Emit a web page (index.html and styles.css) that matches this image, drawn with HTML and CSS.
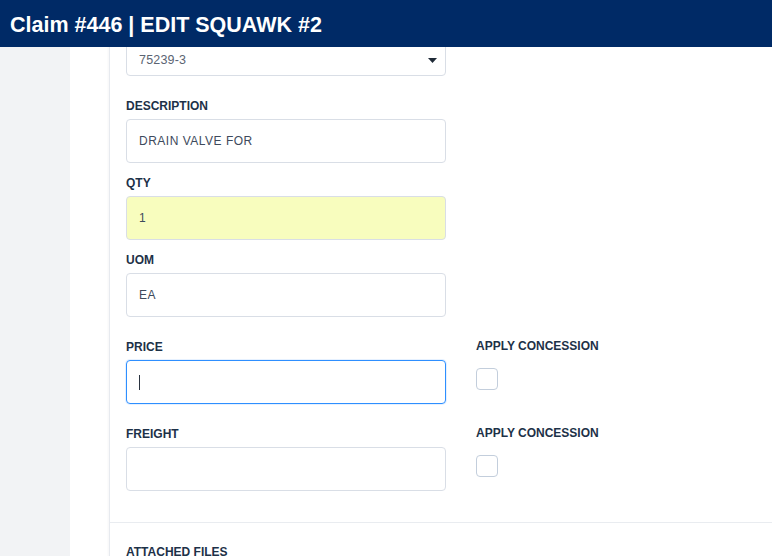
FILE: index.html
```html
<!DOCTYPE html>
<html lang="en">
<head>
<meta charset="utf-8">
<title>Claim #446 | EDIT SQUAWK #2</title>
<link rel="stylesheet" href="styles.css">
</head>
<body>
<header class="topbar">
  <h1 class="title">Claim #446 | EDIT SQUAWK #2</h1>
</header>
<div class="layout">
  <aside class="sidebar"></aside>
  <main class="main">
    <div class="panel">
      <div class="form">
        <div class="select">
          <span class="select-value">75239-3</span>
          <svg class="select-caret" width="9" height="5" viewBox="0 0 9 5"><path d="M0 0H9L4.5 5Z" fill="#1f2a37"/></svg>
        </div>

        <div class="stack">
          <div class="field">
            <label class="label">DESCRIPTION</label>
            <input class="input" type="text" value="DRAIN VALVE FOR">
          </div>
          <div class="field">
            <label class="label">QTY</label>
            <input class="input input-highlight" type="text" value="1">
          </div>
          <div class="field">
            <label class="label">UOM</label>
            <input class="input" type="text" value="EA">
          </div>
        </div>

        <div class="grid">
          <div class="field">
            <label class="label">PRICE</label>
            <div class="input input-focused"><span class="caret"></span></div>
          </div>
          <div class="field">
            <label class="label label-side">APPLY CONCESSION</label>
            <span class="checkbox"></span>
          </div>
          <div class="field">
            <label class="label">FREIGHT</label>
            <input class="input" type="text" value="">
          </div>
          <div class="field">
            <label class="label label-side">APPLY CONCESSION</label>
            <span class="checkbox"></span>
          </div>
        </div>
      </div>

      <div class="divider"></div>

      <div class="form">
        <div class="label section-label">ATTACHED FILES</div>
      </div>
    </div>
  </main>
</div>
</body>
</html>
```

FILE: styles.css
```css
* { box-sizing: border-box; }

html, body {
  margin: 0;
  padding: 0;
  height: 100%;
  overflow: hidden;
}

body {
  font-family: "Liberation Sans", Arial, sans-serif;
  background: #ffffff;
}

.topbar {
  position: fixed;
  top: 0;
  left: 0;
  right: 0;
  height: 47px;
  background: #002a66;
  z-index: 10;
}

.title {
  margin: 0;
  padding-left: 10px;
  color: #ffffff;
  font-size: 21.5px;
  font-weight: 700;
  line-height: 50px;
}

.layout {
  display: flex;
  min-height: 100vh;
}

.sidebar {
  width: 70px;
  flex: none;
  background: #f2f3f5;
}

.main {
  flex: 1;
  background: #ffffff;
  padding-left: 39px;
}

.panel {
  min-height: 100vh;
  border-left: 1px solid #e7eaef;
  box-shadow: -1px 0 2px rgba(0, 20, 60, 0.04);
  padding-top: 42px;
}

.form {
  padding: 0 16px;
}

.select {
  width: 320px;
  height: 34px;
  border: 1px solid #d9dee6;
  border-radius: 4px;
  display: flex;
  align-items: center;
  justify-content: space-between;
  padding: 0 8px 0 12px;
}

.select-value {
  font-size: 12.5px;
  color: #5b6472;
  letter-spacing: 0.2px;
  padding-top: 2px;
}

.select-caret {
  display: block;
  margin-top: 2px;
}

.stack {
  margin-top: 21px;
  display: flex;
  flex-direction: column;
  gap: 11px;
}

.field {
  display: flex;
  flex-direction: column;
}

.label {
  display: block;
  font-size: 12px;
  font-weight: 700;
  line-height: 16px;
  color: #1d3148;
  padding-top: 1px;
  margin-bottom: 5px;
}

.label-side {
  padding-top: 0;
  margin-bottom: 6px;
}

.input {
  width: 320px;
  height: 44px;
  border: 1px solid #d9dee6;
  border-radius: 4px;
  background: #ffffff;
  padding: 0 12px;
  font-family: "Liberation Sans", Arial, sans-serif;
  font-size: 12px;
  letter-spacing: 0.5px;
  color: #3d4a5c;
  outline: none;
}

.input-highlight {
  background: #f8fdbe;
}

.input-focused {
  border-color: #2e8fff;
  box-shadow: 0 0 0 1px rgba(46, 143, 255, 0.12);
  display: flex;
  align-items: center;
}

.caret {
  display: block;
  width: 1px;
  height: 15px;
  background: #2a3340;
}

.grid {
  margin-top: 21px;
  display: grid;
  grid-template-columns: 320px auto;
  column-gap: 30px;
  row-gap: 21px;
}

.checkbox {
  display: block;
  width: 22px;
  height: 22px;
  margin-top: 8px;
  border: 1px solid #c3cedc;
  border-radius: 4px;
  background: #ffffff;
}

.divider {
  margin-top: 31px;
  border-top: 1px solid #e9ecf0;
}

.section-label {
  margin-top: 20px;
}
```
